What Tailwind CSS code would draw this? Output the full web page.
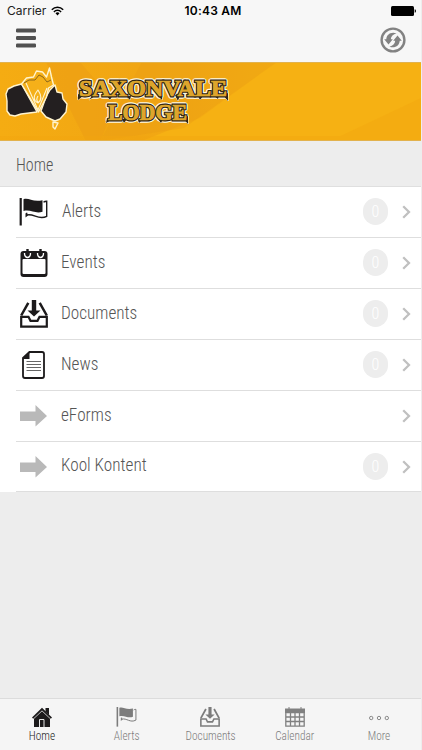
<!DOCTYPE html>
<html lang="en">
<head>
  <meta charset="utf-8"/>
  <meta content="width=device-width, initial-scale=1.0" name="viewport"/>
  <title>Saxonvale Lodge</title>
  <script src="https://cdn.jsdelivr.net/npm/@tailwindcss/browser@4"></script>
</head>
<body class="bg-[#ededed] overflow-hidden">
  <!-- Shared icons -->
  <svg class="hidden">
    <symbol id="flag" viewBox="0 0 28 28">
      <path d="M1.2 0v27.5" fill="none" stroke="currentColor" stroke-width="2.2"/>
      <path d="M4 1.2c5-2 9 3.2 19 1v11.500c-7 2.800-12-2.800-19-.6z" fill="currentColor"/>
      <path d="M24 4.200c1-.8 2-.9 3.200-.9v15c-8 4.500-13-3.300-20-1.200v-2.300" fill="none" stroke="currentColor" stroke-width="1.400"/>
      <path d="M6 19.500v-4.500l2.500 2.400z" fill="currentColor"/>
    </symbol>
    <symbol id="inbox" viewBox="0 0 28 28">
      <path d="M8.300 2.800 1.200 15.500M19.700 2.800l7.100 12.700" fill="none" stroke="currentColor" stroke-width="2.500"/>
      <path d="M1.200 16.800h7.300l2 4h7l2-4h7.300v9.800H1.200z" fill="none" stroke="currentColor" stroke-width="2.200"/>
      <path d="M11.800 0h4.400v10.500h4.300L14 16.500l-6.500-6h4.300z" fill="currentColor"/>
    </symbol>
    <symbol id="arrow" viewBox="0 0 27 22">
      <path d="M0 6.500h15.500V0L27 11 15.500 21.500V16H0z" fill="#b9b9b9"/>
    </symbol>
    <symbol id="chevron" viewBox="0 0 9 14">
      <path d="M1.200 1.200 7 7l-5.800 5.800" fill="none" stroke="#c0c0c0" stroke-width="2.300"/>
    </symbol>
  </svg>

  <div class="w-[421px] h-[750px] flex flex-col font-['Roboto_Condensed','Roboto',sans-serif] font-light font-stretch-condensed text-[#555]">
    <header class="h-[62px] shrink-0 bg-[#f7f7f7]">
      <div class="h-[22px] pl-[7px] pr-[5px] grid grid-cols-3 items-center font-['Inter',sans-serif] font-normal font-stretch-normal text-black">
        <div class="flex items-center gap-[5px]">
          <span class="text-[12px] leading-[22px] text-[#222]">Carrier</span>
          <svg class="w-[13px] h-[10px]" viewBox="0 0 13 10">
            <path d="M.8 3.700a8 8 0 0 1 11.400 0M2.900 5.900a5 5 0 0 1 7.200 0" fill="none" stroke="#000" stroke-width="1.500"/>
            <path d="M4.500 7.300a2.900 2.900 0 0 1 4 0L6.500 9.500z"/>
          </svg>
        </div>
        <span class="pl-[3px] text-[12px] leading-[22px] font-semibold text-center tracking-[0.2px] whitespace-nowrap">10:43 AM</span>
        <svg class="w-[26px] h-[10px] justify-self-end" viewBox="0 0 26 10">
          <rect x="1" y="0" width="23" height="10" rx="1.500"/>
          <path d="M24.700 3.200q1.300.3 1.300 1.800t-1.300 1.800z"/>
        </svg>
      </div>
      <div class="h-10 pl-4 pr-[15px] flex justify-between">
        <svg class="w-5 h-5 mt-[6px]" viewBox="0 0 20 20" fill="#505050">
          <rect y=".5" width="20" height="4" rx="1.200"/>
          <rect y="8" width="20" height="4" rx="1.200"/>
          <rect y="15.400" width="20" height="4" rx="1.200"/>
        </svg>
        <svg class="w-[26px] h-[26px] mt-[5px]" viewBox="0 0 26 26" fill="#828282">
          <circle cx="13" cy="13" r="11.400" fill="none" stroke="#828282" stroke-width="2.400"/>
          <path d="M16.500 6.300C11 4.200 6.400 7.500 6.300 12.200H4.200L8.500 17.400l4.300-5.200h-2c.1-2.800 2.400-5 5.700-5.900z"/>
          <path d="M9.500 19.700c5.500 2.100 10.100-1.200 10.200-5.900h2.100L17.500 8.600l-4.300 5.200h2c-.1 2.800-2.400 5-5.700 5.900z"/>
        </svg>
      </div>
    </header>

    <!-- Club banner -->
    <svg class="w-[421px] h-[79px] shrink-0" viewBox="0 0 421 79">
      <defs>
        <linearGradient id="gold" x2="1" y2="0">
          <stop offset="0" stop-color="#f5ac12"/>
          <stop offset=".5" stop-color="#f1a613"/>
          <stop offset="1" stop-color="#f6b113"/>
        </linearGradient>
      </defs>
      <rect width="421" height="79" fill="#f6b113"/>
      <path d="M0 0h277l-77 56-58 23H0z" fill="url(#gold)"/>
      <path d="M46 0h34l36 42-16 37H86z" fill="#ec9c13" opacity=".5"/>
      <path d="M142 0h135l-93 66-84 13z" fill="#e99b15" opacity=".35"/>
      <path d="M330 79l91-43v43zM0 74h421v5H0z" fill="#f2a510" opacity=".4"/>
      <path d="M0 .5h421M0 78.500h421" stroke="#e2b24d"/>
      <g stroke="#fff4cf" stroke-width="1.400" stroke-linejoin="round">
        <path d="M21.500 22 37 50l-16 2-6 2-5-1-3-4V39l-1-7 2-5 6-3z" fill="#231f20"/>
        <path d="m55 23 2 7 5 1 1 6 4 5-1 8-6 7-5 2-9-4-5-6 5-14 4-7z" fill="#231f20"/>
        <path d="m21.500 22 5-6 7-1 3-6 6 1 4 5 3-9 2 9 2 8-5 3-2 9-8 15z" fill="#f5b019"/>
        <path d="m53 60 5 1-3 6-2-2z" fill="#f5b019"/>
      </g>
      <g fill="none" stroke="#fff4cf" stroke-linejoin="round">
        <path d="m24 21 5-3h6l4-5 4 2 4 5 4-2" stroke="#5f481c" stroke-width=".7"/>
        <path d="M38 28c-5 6-5 10 0 13 4-3 4-7 0-13zm0 6c-2 3-1 5 0 6M26 21l12 27 9-22" stroke-width="1.100"/>
      </g>
      <g font-family="'Liberation Serif', serif" font-weight="700" font-size="22.500">
        <g fill="#fff8df" stroke="#fff8df" stroke-width="5.400" stroke-linejoin="round">
          <text x="79" y="34" textLength="148" lengthAdjust="spacingAndGlyphs">SAXONVALE</text>
          <text x="108" y="57.500" textLength="79" lengthAdjust="spacingAndGlyphs">LODGE</text>
        </g>
        <!-- thorn ends on the lettering -->
        <path d="M78 32v6l5-4zM92 34l-3 4 6-4zM107 34l3 4 2-4zM126 34l4 4 1-4zM158 34l4 4 0-5zM175 33l3 6 2-6zM198 34l2 4 3-4zM214 34l4 3 1-4zM223 33l5 6v-8zM107 57l-1 4 5-3zM122 57l2 4 3-4zM138 57l1 4 4-4zM158 57l3 4 2-4zM183 56l5 6v-8z" fill="#302616" stroke="#fff8df" stroke-width="1" paint-order="stroke"/>
        <g fill="#dda52c" stroke="#302616" stroke-width="3" paint-order="stroke">
          <text x="79" y="34" textLength="148" lengthAdjust="spacingAndGlyphs">SAXONVALE</text>
          <text x="108" y="57.500" textLength="79" lengthAdjust="spacingAndGlyphs">LODGE</text>
        </g>
        <g fill="#dda52c" stroke="#dda52c" stroke-width=".7">
          <text x="79" y="34" textLength="148" lengthAdjust="spacingAndGlyphs" aria-hidden="true">SAXONVALE</text>
          <text x="108" y="57.500" textLength="79" lengthAdjust="spacingAndGlyphs" aria-hidden="true">LODGE</text>
        </g>
      </g>
    </svg>

    <h1 class="h-[46px] shrink-0 border-b border-[#dfdfdf] pl-4 text-[18px] leading-[47px]"><span class="inline-block origin-left scale-x-[.89]">Home</span></h1>

    <main class="bg-white pl-4 text-[18px]">
      <div class="h-[51px] pl-[3px] pr-[10px] flex items-center border-b border-[#dedede]">
        <svg class="w-[29px] h-7 mr-[14px] text-[#1c1a1b]"><use href="#flag"/></svg>
        <span class="grow -mt-1 origin-left scale-x-[.955]">Alerts</span>
        <span class="w-[25px] h-[27px] mr-[14px] -mt-px rounded-full bg-[#ededed] text-white text-[16px] leading-[27px] text-center">0</span>
        <svg class="w-[9px] h-[14px]"><use href="#chevron"/></svg>
      </div>
      <div class="h-[51px] pl-1 pr-[10px] flex items-center border-b border-[#dedede]">
        <svg class="w-7 h-7 mr-[13px]" viewBox="0 0 28 28">
          <path d="M3.500 2h21q3 0 3 3v20q0 3-3 3h-21q-3 0-3-3V5q0-3 3-3z" fill="#1c1a1b"/>
          <rect x="2.500" y="10" width="23" height="15" rx="1" fill="#fff"/>
          <path d="M4.500 4c0 6 6 6 6 0M17.500 4c0 6 6 6 6 0" fill="none" stroke="#fff" stroke-width="1.300"/>
          <path d="M7.500 0v6M20.500 0v6" stroke="#1c1a1b" stroke-width="2.400"/>
        </svg>
        <span class="grow -mt-1 origin-left scale-x-[.955]">Events</span>
        <span class="w-[25px] h-[27px] mr-[14px] -mt-px rounded-full bg-[#ededed] text-white text-[16px] leading-[27px] text-center">0</span>
        <svg class="w-[9px] h-[14px]"><use href="#chevron"/></svg>
      </div>
      <div class="h-[51px] pl-1 pr-[10px] flex items-center border-b border-[#dedede]">
        <svg class="w-7 h-7 mr-[13px] text-[#1c1a1b]"><use href="#inbox"/></svg>
        <span class="grow -mt-1 origin-left scale-x-[.955]">Documents</span>
        <span class="w-[25px] h-[27px] mr-[14px] -mt-px rounded-full bg-[#ededed] text-white text-[16px] leading-[27px] text-center">0</span>
        <svg class="w-[9px] h-[14px]"><use href="#chevron"/></svg>
      </div>
      <div class="h-[51px] pl-1 pr-[10px] flex items-center border-b border-[#dedede]">
        <svg class="w-7 h-7 mr-[13px]" viewBox="0 0 28 28">
          <path d="M9.500 1H22q2 0 2 2v22q0 2-2 2H5q-2 0-2-2V7z" fill="#fff" stroke="#1c1a1b" stroke-width="1.800"/>
          <path d="M2.500 8 9.500 0v8z" fill="#1c1a1b"/>
          <path d="M6.500 10.500h14.500M6.500 13.500h14.500M6.500 16.500h14.500M6.500 19.500h14.500" stroke="#666" stroke-width="1"/>
        </svg>
        <span class="grow -mt-1 origin-left scale-x-[.955]">News</span>
        <span class="w-[25px] h-[27px] mr-[14px] -mt-px rounded-full bg-[#ededed] text-white text-[16px] leading-[27px] text-center">0</span>
        <svg class="w-[9px] h-[14px]"><use href="#chevron"/></svg>
      </div>
      <div class="h-[51px] pl-1 pr-[10px] flex items-center border-b border-[#dedede]">
        <svg class="w-[27px] h-[22px] mr-[14px]"><use href="#arrow"/></svg>
        <span class="grow -mt-1 origin-left scale-x-[.955]">eForms</span>
        <svg class="w-[9px] h-[14px]"><use href="#chevron"/></svg>
      </div>
      <div class="h-[50px] pl-1 pr-[10px] flex items-center border-b border-[#dedede]">
        <svg class="w-[27px] h-[22px] mr-[14px]"><use href="#arrow"/></svg>
        <span class="grow -mt-1 origin-left scale-x-[.955]">Kool Kontent</span>
        <span class="w-[25px] h-[27px] mr-[14px] -mt-px rounded-full bg-[#ededed] text-white text-[16px] leading-[27px] text-center">0</span>
        <svg class="w-[9px] h-[14px]"><use href="#chevron"/></svg>
      </div>
    </main>

    <nav class="mt-auto h-[52px] shrink-0 border-t border-[#dcdcdc] bg-[#f5f5f5] grid grid-cols-5 text-[12px] leading-[14px] text-[#7c7c7c]">
      <a class="flex flex-col items-center pt-[8px] gap-[2px] text-[#222]" href="#">
        <svg class="w-5 h-5" viewBox="0 0 20 20">
          <path d="M13.500 1H17v7l-3.500-3.500z" fill="#1c1a1b"/>
          <path d="M0 10.500 10 .8l10 9.700-1.200 1.200L10 3.400 1.200 11.700z" fill="#1c1a1b"/>
          <path d="M2 11.800 10 4.200l8 7.600V20H2z" fill="#1c1a1b"/>
          <path d="M7.500 20v-7.500h4.500V20" fill="none" stroke="#e8e8e8" stroke-width="1"/>
        </svg>
        <span class="scale-x-[.94]">Home</span>
      </a>
      <a class="flex flex-col items-center pt-[8px] gap-[2px]" href="#">
        <svg class="w-[21px] h-5"><use href="#flag"/></svg>
        <span class="scale-x-[.94]">Alerts</span>
      </a>
      <a class="flex flex-col items-center pt-[8px] gap-[2px]" href="#">
        <svg class="w-5 h-5"><use href="#inbox"/></svg>
        <span class="scale-x-[.94]">Documents</span>
      </a>
      <a class="flex flex-col items-center pt-[8px] gap-[2px]" href="#">
        <svg class="w-5 h-5" viewBox="0 0 20 20">
          <path d="M0 2h20v3.500H0zM4 0v3M16 0v3" fill="#808080" stroke="#808080" stroke-width="1"/>
          <path d="M.8 5.500h18.400v13.700H.8zM5.500 6v13M10 6v13M14.500 6v13M1 10h18M1 14.500h18" fill="none" stroke="#808080" stroke-width="1.300"/>
        </svg>
        <span class="scale-x-[.94]">Calendar</span>
      </a>
      <a class="flex flex-col items-center pt-[8px] gap-[2px]" href="#">
        <svg class="w-5 h-5" viewBox="0 0 20 20" fill="none" stroke="#8a8a8a">
          <circle cx="2.200" cy="11" r="1.700"/>
          <circle cx="10" cy="11" r="1.700"/>
          <circle cx="17.800" cy="11" r="1.700"/>
        </svg>
        <span class="scale-x-[.94]">More</span>
      </a>
    </nav>
  </div>
</body>
</html>
